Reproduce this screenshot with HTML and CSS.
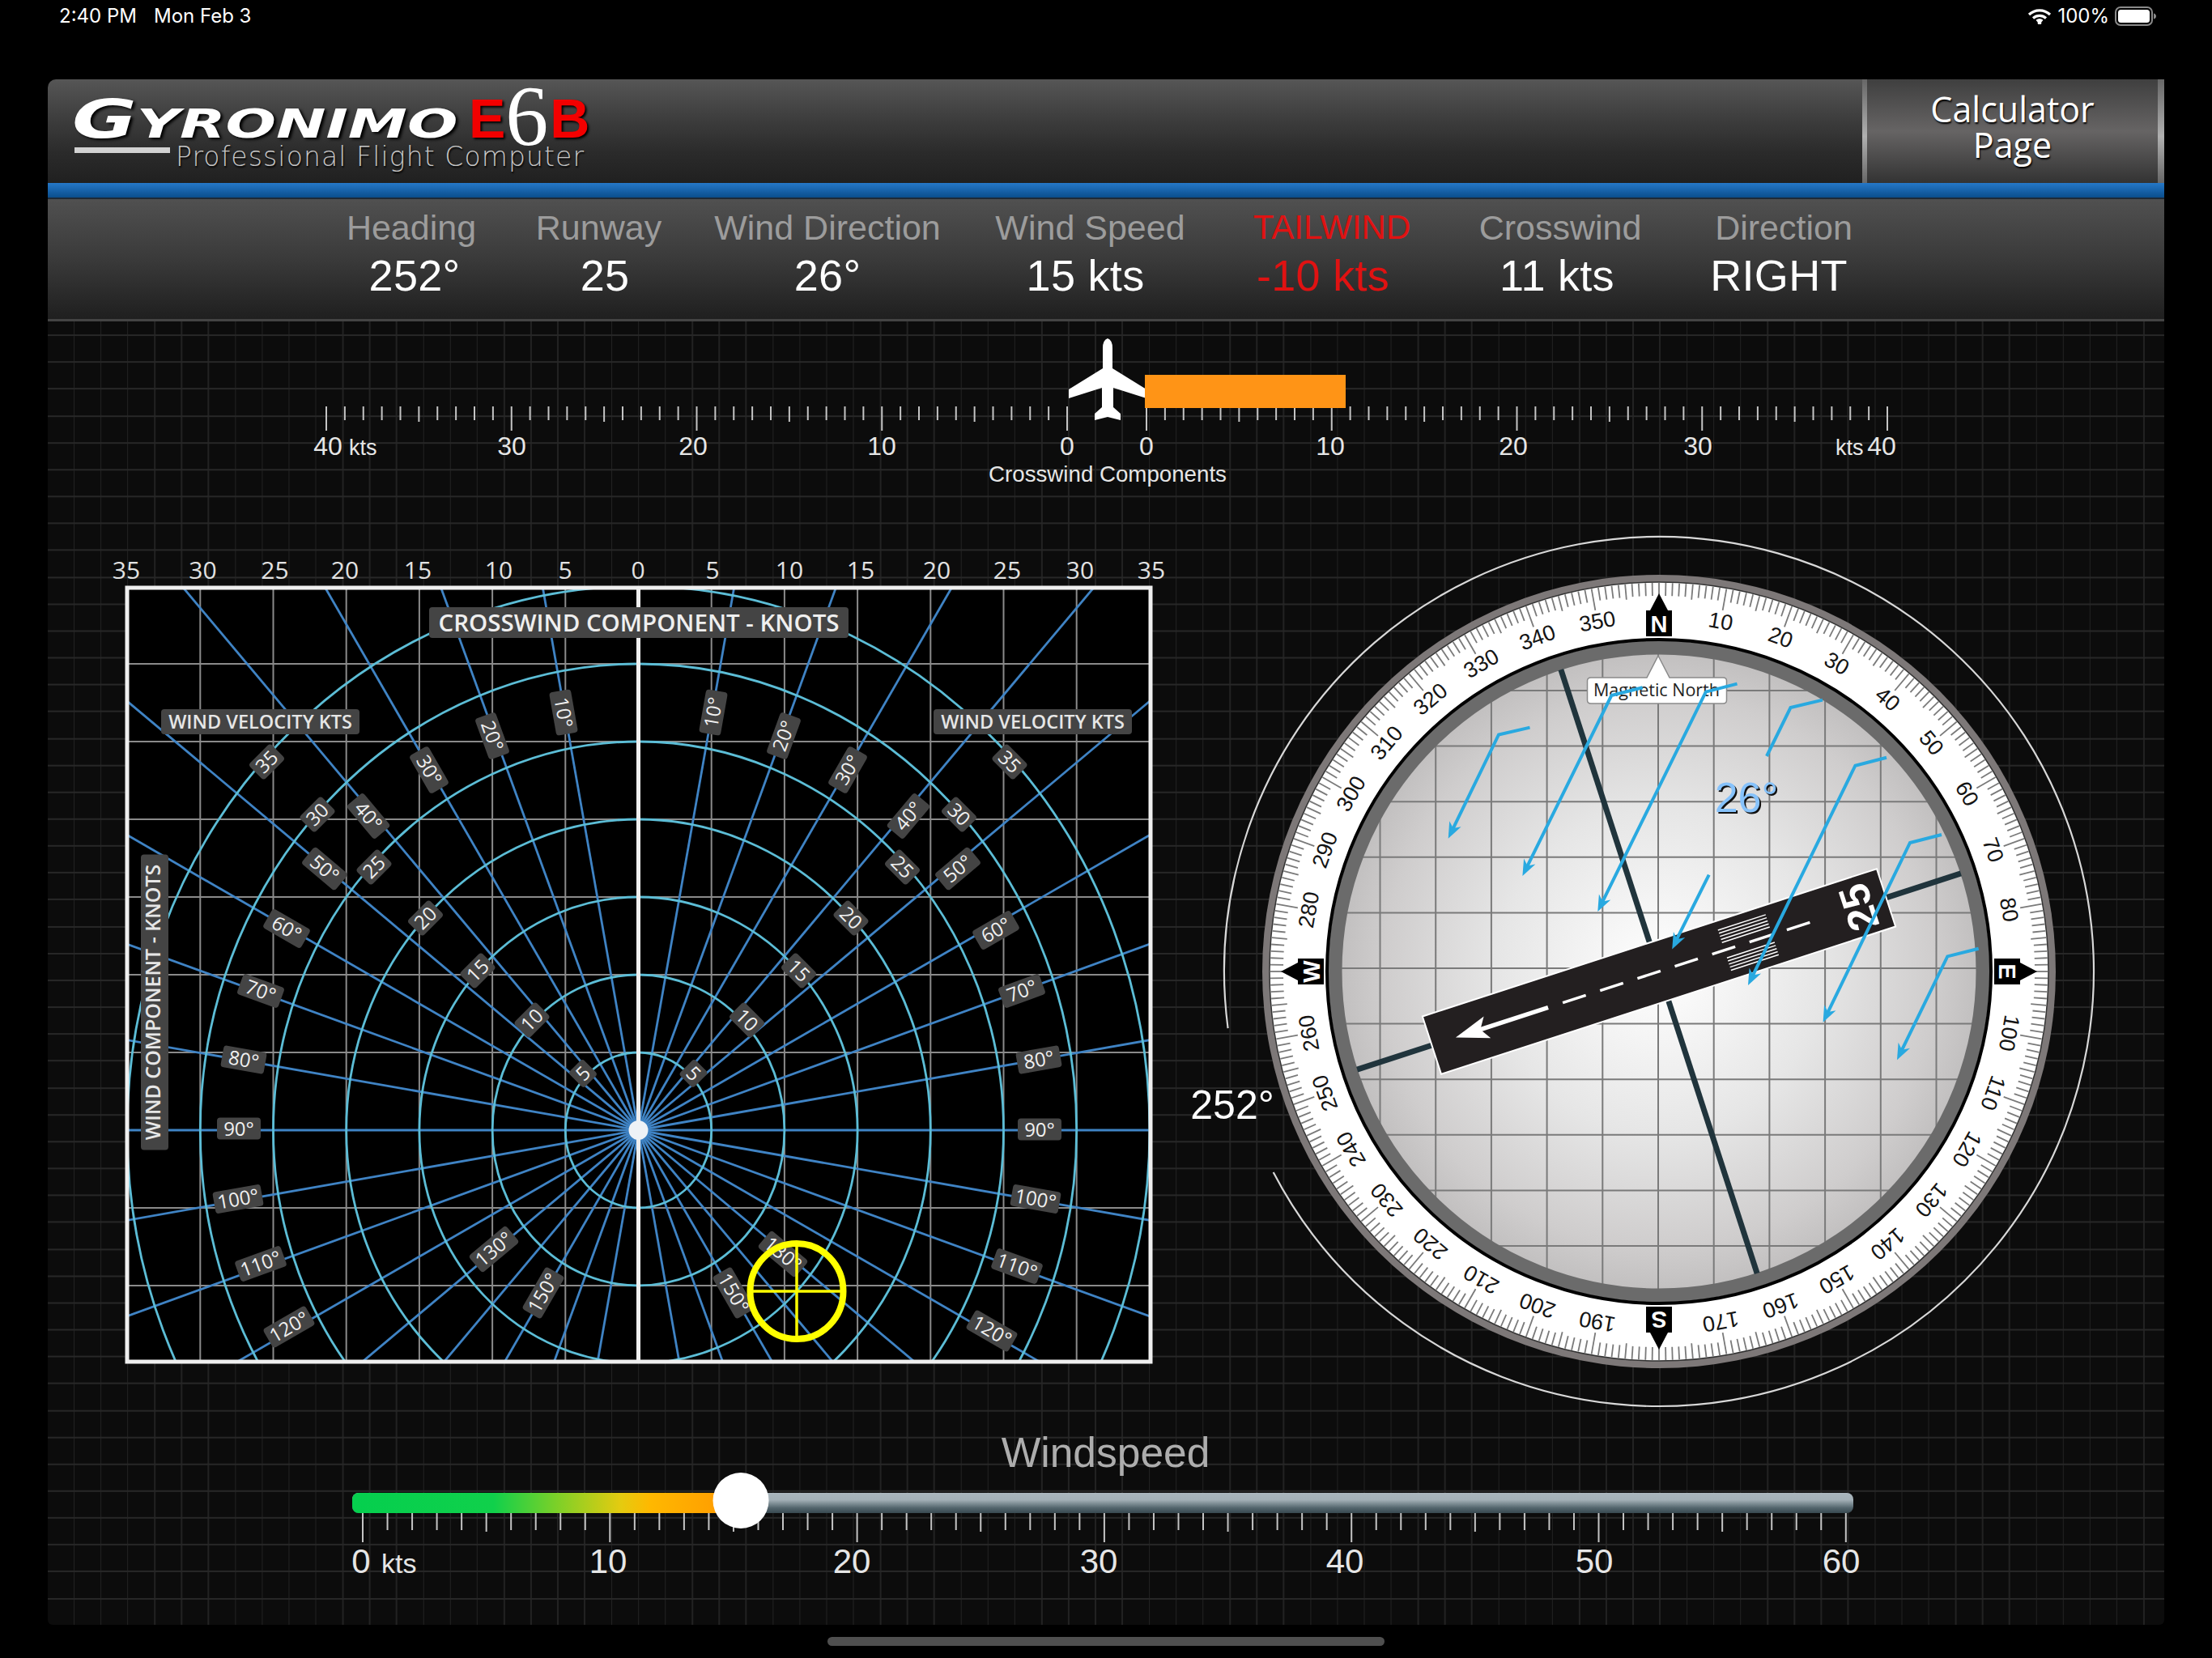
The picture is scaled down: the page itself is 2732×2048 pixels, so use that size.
FILE: index.html
```html
<!DOCTYPE html>
<html lang="en">
<head>
<meta charset="utf-8">
<title>Gyronimo E6B</title>
<link rel="stylesheet" href="styles.css">
</head>
<body>
<div class="status">
  <div class="status-left"><span>2:40 PM</span><span>Mon Feb 3</span></div>
  <div class="status-right">
    <svg class="wifi" viewBox="0 0 30 20"><path d="M2 8A19 19 0 0 1 28 8M7 12.5A12 12 0 0 1 23 12.5M11.5 16A5.5 5.5 0 0 1 18.5 16"/><circle cx="15" cy="18" r="2.4"/></svg>
    <span>100%</span>
    <svg class="battery" viewBox="0 0 52 24"><rect class="bat-shell" x="1" y="1" width="45" height="22" rx="6"/><rect class="bat-fill" x="4" y="4" width="39" height="16" rx="3.5"/><path class="bat-nub" d="M48 8.5Q51 9.5 51 12T48 15.5Z"/></svg>
  </div>
</div>
<main class="panel">
  <header class="header">
    <div class="logo">
      <div class="logo-top">
        <span class="gy"><span class="gy-g">G</span>yronimo</span>
        <span class="e6b">E</span><span class="six">6</span><span class="e6b">B</span>
      </div>
      <div class="logo-sub"><span class="logo-bar"></span><span class="tagline">Professional Flight Computer</span></div>
    </div>
    <button class="calc">Calculator<br>Page</button>
  </header>
  <div class="bluebar"></div>
  <section class="info">
    <div class="cell"><div class="lab">Heading</div><div class="val sh-a">252°</div></div>
    <div class="cell"><div class="lab">Runway</div><div class="val sh-b">25</div></div>
    <div class="cell"><div class="lab">Wind Direction</div><div class="val">26°</div></div>
    <div class="cell"><div class="lab">Wind Speed</div><div class="val sh-c">15 kts</div></div>
    <div class="cell"><div class="lab red tail">TAILWIND</div><div class="val red sh-d">-10 kts</div></div>
    <div class="cell"><div class="lab">Crosswind</div><div class="val sh-e">11 kts</div></div>
    <div class="cell"><div class="lab">Direction</div><div class="val sh-c">RIGHT</div></div>
  </section>
  <section class="board">
    <svg id="xwind" class="sec-top" viewBox="59 397 2614 243"></svg>
    <div class="mid">
      <svg id="chart" class="sec-chart" viewBox="59 640 1381 1110"></svg>
      <svg id="dial" class="sec-dial" viewBox="1440 640 1233 1110">
        <defs>
          <radialGradient id="glass"><stop offset="0" stop-color="#ffffff"/><stop offset="0.5" stop-color="#e6e6e6"/><stop offset="0.85" stop-color="#cfcdcd"/><stop offset="1" stop-color="#c0bebe"/></radialGradient>
          <clipPath id="glassclip"><circle cx="2049" cy="1200" r="392"/></clipPath>
        </defs>
      </svg>
    </div>
    <svg id="speed" class="sec-speed" viewBox="59 1750 2614 257">
      <defs>
        <linearGradient id="tgrey" x1="0" y1="0" x2="0" y2="1"><stop offset="0" stop-color="#aab6bd"/><stop offset="0.35" stop-color="#a3b0b7"/><stop offset="0.75" stop-color="#52646c"/><stop offset="1" stop-color="#384950"/></linearGradient>
        <linearGradient id="tgreen"><stop offset="0" stop-color="#05cf4e"/><stop offset="0.38" stop-color="#10d04b"/><stop offset="0.55" stop-color="#7dd028"/><stop offset="0.72" stop-color="#e4cb10"/><stop offset="0.8" stop-color="#ffb800"/><stop offset="1" stop-color="#ff9c00"/></linearGradient>
      </defs>
    </svg>
  </section>
</main>
<div class="home"></div>
<script src="app.js"></script>
</body>
</html>
```
FILE: styles.css
```css
* { box-sizing: border-box; }
html, body { margin: 0; padding: 0; background: #000; }
body { width: 2732px; height: 2048px; overflow: hidden; font-family: "Liberation Sans", Arial, sans-serif; color: #fff; }

.status { height: 98px; display: flex; justify-content: space-between; align-items: flex-start; padding: 6px 68px 0 73px; font: 24px/28px Inter, sans-serif; }
.status-left { display: flex; gap: 21px; }
.status-right { display: flex; align-items: center; gap: 7px; }
.wifi { width: 30px; height: 20px; }
.wifi path { fill: none; stroke: #fff; stroke-width: 3.2; }
.wifi circle { fill: #fff; }
.battery { width: 52px; height: 24px; }
.bat-shell { fill: none; stroke: #8a8a8a; stroke-width: 2; }
.bat-fill { fill: #fff; }
.bat-nub { fill: #8a8a8a; }

.panel { margin: 0 59px; height: 1909px; display: flex; flex-direction: column; }
.header { height: 128px; display: flex; justify-content: space-between; border-top-left-radius: 10px; background: linear-gradient(#565656, #3f3f3f 35%, #2b2b2b 70%, #202020); }
.logo { padding: 10px 0 0 30px; }
.logo-top { display: flex; align-items: baseline; height: 64px; margin-top: -28px; }
.gy { display: inline-block; width: 484px; margin-right: 6px; font: italic bold 50px/80px "DejaVu Sans", sans-serif; text-transform: uppercase; white-space: nowrap; transform: scaleX(1.47); transform-origin: left; text-shadow: 2px 2px 3px #000; }
.gy-g { font-size: 66px; }
.e6b { font: bold 68px/80px "Liberation Sans", sans-serif; color: #f30000; text-shadow: 2px 2px 3px #000; }
.six { font: 106px/110px "Liberation Serif", serif; color: #fff; margin: 0 2px 0 0; transform: translateY(9px); display: inline-block; }
.logo-sub { display: flex; align-items: flex-start; margin-top: 38px; }
.logo-bar { display: block; width: 118px; height: 7px; margin: 0 7px 0 3px; background: #d2d2d2; }
.tagline { font: 300 33px/36px "DejaVu Sans", sans-serif; letter-spacing: 1.1px; color: #c6c6c6; text-shadow: 1px 2px 2px #000; white-space: nowrap; margin-top: -6px; }
.calc { width: 373px; padding: 0 0 10px; border: 0; border-left: 6px solid; border-right: 8px solid; border-image: linear-gradient(#666, #b0b0b0 55%, #666) 1; background: linear-gradient(#3f3f3f, #666464 50%, #333); color: #fff; font: 43px/44px "Open Sans", sans-serif; text-shadow: 1px 2px 2px #000; }

.bluebar { height: 20px; background: linear-gradient(#2578c8, #0b4f8e 88%, #1e2a38 88%); }

.info { height: 151px; padding-left: 333px; display: grid; grid-template-columns: 232px 231px 334px 315px 282px 282px 270px; background: linear-gradient(#505050, #3a3a3a 50%, #1f1f1f); border-bottom: 3px solid #444; }
.cell { text-align: center; padding-top: 10px; white-space: nowrap; display: flex; flex-direction: column; align-items: center; }
.lab { font-size: 43px; line-height: 50px; color: #9c9c9c; }
.val { font-size: 54px; line-height: 62px; letter-spacing: .3px; color: #fff; margin-top: 3px; }
.tail { font-size: 42px; }
.red { color: #e01212; }
.sh-a { padding-left: 8px; }
.sh-b { padding-left: 15px; }
.sh-c { padding-right: 12px; }
.sh-d { padding-right: 22px; }
.sh-e { padding-right: 8px; }

.board { flex: 1; display: flex; flex-direction: column; border-radius: 0 0 6px 6px; background-color: #0c0c0c; background-image: repeating-linear-gradient(to bottom, transparent 0, transparent 31.2px, #272727 31.2px, #272727 33.2px), repeating-linear-gradient(to right, transparent 0, transparent 31.7px, #222 31.7px, #222 33.2px); background-position: 0 -15px, 0 -9px; }
.sec-top { display: block; width: 2614px; height: 243px; }
.mid { display: flex; height: 1110px; }
.sec-chart { display: block; width: 1381px; height: 1110px; }
.sec-dial { display: block; width: 1233px; height: 1110px; }
.sec-speed { display: block; width: 2614px; height: 257px; }
.home { width: 688px; height: 11px; margin: 15px auto 0; border-radius: 6px; background: #4f4f4f; }

/* SVG: scales */
.tick { stroke: #c4c4c4; stroke-width: 2; }
.scale-num { font: 32px "Liberation Sans", sans-serif; fill: #e6e6e6; text-anchor: middle; }
.scale-kts { font: 27px "Liberation Sans", sans-serif; fill: #e6e6e6; }
.scale-cap { font: 27.7px "Liberation Sans", sans-serif; fill: #e6e6e6; text-anchor: middle; }
.plane { fill: #fff; }
.orange { fill: #ff9416; }
.speed-num { font: 42px "Liberation Sans", sans-serif; fill: #e6e6e6; text-anchor: middle; }
.speed-kts { font: 34px "Liberation Sans", sans-serif; fill: #e6e6e6; }
.speed-cap { font: 51.5px "Liberation Sans", sans-serif; fill: #adadad; text-anchor: middle; }
.thumb { fill: #fff; }

/* SVG: chart */
.c-bg { fill: #000; }
.c-grid { stroke: #8a8a8a; stroke-width: 2; }
.c-rad { stroke: #3f83c4; stroke-width: 2.8; }
.c-arc { fill: none; stroke: #5cbdd6; stroke-width: 2.8; }
.c-zero { stroke: #efefef; stroke-width: 5; }
.c-frame { fill: none; stroke: #efefef; stroke-width: 5; }
.c-dot { fill: #eef2f6; }
.c-top { font: 30px "Open Sans", sans-serif; fill: #e2e2e2; text-anchor: middle; }
.pill { fill: #444; }
.pill-t { font: 24px "Open Sans", sans-serif; fill: #f0f0f0; text-anchor: middle; }
.pill-head { font: 600 29.5px "Open Sans", sans-serif; fill: #efefef; text-anchor: middle; }
.pill-sub { font: 600 23.5px "Open Sans", sans-serif; fill: #e6e6e6; text-anchor: middle; }
.pill-side { font: 600 25px "Open Sans", sans-serif; fill: #e6e6e6; text-anchor: middle; }
.yel-ring { fill: none; stroke: #ffff00; stroke-width: 8; }
.yel-x { stroke: #ffff00; stroke-width: 3.5; }

/* SVG: compass */
.thin-ring { fill: none; stroke: #d8d8d8; stroke-width: 2.2; }
.ring-out { fill: #7d7878; }
.ring-white { fill: #fff; stroke: #333; stroke-width: 1.5; }
.ring-black { fill: none; stroke: #000; stroke-width: 4; }
.ring-grey { fill: none; stroke: #6b6b6b; stroke-width: 17; }
.glass { fill: url(#glass); }
.d-grid { stroke: #7a7a7a; stroke-width: 2; }
.d-tick { stroke: #7a7a7a; stroke-width: 1.8; }
.d-num { font: 27px "Liberation Sans", sans-serif; fill: #141414; text-anchor: middle; }
.d-box { fill: #000; }
.d-let { font: bold 29px "Liberation Sans", sans-serif; fill: #fff; text-anchor: middle; }
.d-deg { font: 50px "Liberation Sans", sans-serif; fill: #fff; text-anchor: middle; }
.axis { stroke: #20343c; stroke-width: 7; }
.rw { fill: #231f20; stroke: #fff; stroke-width: 2; }
.rw-w { stroke: #fff; stroke-width: 3.5; }
.rw-p { stroke: #fff; stroke-width: 1.5; }
.rw-s { stroke: #fff; stroke-width: 5.5; }
.rw-h { fill: #fff; }
.rw-n { font: bold 52px "Liberation Sans", sans-serif; fill: #fff; text-anchor: middle; }
.mag { fill: #fff; stroke: #8a8a8a; stroke-width: 1.5; }
.mag-t { font: 21.5px "Open Sans", sans-serif; fill: #222; text-anchor: middle; }
.wind { fill: none; stroke: #29a9e0; stroke-width: 4; }
.wind-h { fill: #29a9e0; }
.d-26 { font: 52px "Liberation Sans", sans-serif; fill: #86c2fb; text-anchor: middle; text-shadow: 2px 2px 0 #111; }
```
FILE: app.js
```js
var NS = 'http://www.w3.org/2000/svg';
function el(p, n, a, t) {
  var e = document.createElementNS(NS, n);
  for (var k in a) e.setAttribute(k, a[k]);
  if (t !== undefined) e.textContent = t;
  p.appendChild(e);
  return e;
}
function line(p, c, x1, y1, x2, y2) { return el(p, 'line', { 'class': c, x1: x1, y1: y1, x2: x2, y2: y2 }); }
function text(p, c, x, y, t, tr) {
  var a = { 'class': c, x: x, y: y };
  if (tr) a.transform = tr;
  return el(p, 'text', a, t);
}
var i, a;

/* Crosswind scale */
var xw = document.getElementById('xwind');
for (i = 0; i <= 40; i++) {
  var ln = i % 10 === 0 ? 532 : (i % 5 === 0 ? 521 : 519);
  line(xw, 'tick', 403 + i * 22.875, 502, 403 + i * 22.875, ln);
  line(xw, 'tick', 1416 + i * 22.875, 502, 1416 + i * 22.875, ln);
}
[[405, '40'], [632, '30'], [856, '20'], [1089, '10'], [1318, '0'], [1416, '0'], [1643, '10'], [1869, '20'], [2097, '30'], [2324, '40']].forEach(function (d) {
  text(xw, 'scale-num', d[0], 562, d[1]);
});
text(xw, 'scale-kts', 431, 562, 'kts');
text(xw, 'scale-kts', 2267, 562, 'kts');
text(xw, 'scale-cap', 1368, 595, 'Crosswind Components');
el(xw, 'path', { 'class': 'plane', d: 'M1368 418Q1374 420 1374 430V455L1416 481V492L1375 479V503L1384 511V519L1368 515L1352 519V511L1361 503V479L1320 492V481L1362 455V430Q1362 420 1368 418Z' });
el(xw, 'rect', { 'class': 'orange', x: 1414, y: 463, width: 248, height: 41 });

/* Polar chart */
var ch = document.getElementById('chart');
var defs = el(ch, 'defs', {});
el(el(defs, 'clipPath', { id: 'fr' }), 'rect', { x: 157, y: 726, width: 1264, height: 956 });
el(ch, 'rect', { 'class': 'c-bg', x: 155, y: 724, width: 1268, height: 960 });
var cx = 788.5, cy = 1396, g = el(ch, 'g', { 'clip-path': 'url(#fr)' });
for (i = 1; i <= 6; i++) {
  line(g, 'c-grid', cx - 90.2 * i, 724, cx - 90.2 * i, 1684);
  line(g, 'c-grid', cx + 90.2 * i, 724, cx + 90.2 * i, 1684);
  line(g, 'c-grid', 155, cy - 96 * i, 1423, cy - 96 * i);
}
line(g, 'c-grid', 155, cy + 96, 1423, cy + 96);
line(g, 'c-grid', 155, cy + 192, 1423, cy + 192);
for (a = 10; a <= 170; a += 10) {
  var r = a * Math.PI / 180, sx = Math.sin(r) * 1400, sy = -Math.cos(r) * 1400;
  line(g, 'c-rad', cx, cy, cx + sx, cy + sy);
  line(g, 'c-rad', cx, cy, cx - sx, cy + sy);
}
for (i = 1; i <= 7; i++) el(g, 'ellipse', { 'class': 'c-arc', cx: cx, cy: cy, rx: 90.2 * i, ry: 96 * i });
line(g, 'c-zero', cx, 724, cx, 1684);
el(ch, 'circle', { 'class': 'c-dot', cx: cx, cy: cy, r: 12 });

[[156, 35], [250.5, 30], [339.5, 25], [426, 20], [516, 15], [616, 10], [698, 5], [788, 0], [880, 5], [975, 10], [1063, 15], [1157, 20], [1244, 25], [1334, 30], [1422, 35]].forEach(function (d) {
  text(ch, 'c-top', d[0], 715, d[1]);
});

function pill(x, y, rot, t, w) {
  var p = el(ch, 'g', { transform: 'translate(' + x + ' ' + y + ') rotate(' + rot + ')' });
  el(p, 'rect', { 'class': 'pill', x: -w / 2, y: -13.5, width: w, height: 27, rx: 4 });
  text(p, 'pill-t', 0, 8.5, t);
}
[[696, 880, 80, '10°'], [608, 909, 70, '20°'], [530, 951, 60, '30°'], [455, 1008, 50, '40°'], [401, 1073, 40, '50°'], [354, 1147, 30, '60°'], [322, 1224, 20, '70°'], [301, 1309, 10, '80°'], [295, 1394, 0, '90°'],
 [294, 1481, -10, '100°'], [322, 1561, -20, '110°'], [357, 1639, -30, '120°'], [610, 1543, -40, '130°'], [671, 1597, -60, '150°'],
 [881, 880, -80, '10°'], [968, 909, -70, '20°'], [1047, 951, -60, '30°'], [1122, 1008, -50, '40°'], [1183, 1073, -40, '50°'], [1230, 1149, -30, '60°'], [1262, 1224, -20, '70°'], [1283, 1309, -10, '80°'], [1284, 1395, 0, '90°'],
 [1279, 1481, 10, '100°'], [1256, 1564, 20, '110°'], [1225, 1644, 30, '120°'], [967, 1549, 40, '130°'], [906, 1597, 60, '150°']].forEach(function (d) {
  pill(d[0], d[1], d[2], d[3], d[3].length > 3 ? 60 : 54);
});
[[720, 1326, '5'], [657, 1260, '10'], [590, 1199, '15'], [525.5, 1134, '20'], [462, 1071, '25'], [392, 1006, '30'], [329.5, 941, '35']].forEach(function (d) {
  pill(d[0], d[1], -45, d[2], d[2].length > 1 ? 38 : 25);
  pill(1576.5 - d[0] + (d[2] === '10' ? 3 : 0), d[1], 45, d[2], d[2].length > 1 ? 38 : 25);
});
function band(x, y, w, h, c, t, base, tr) {
  var p = el(ch, 'g', tr ? { transform: tr } : {});
  el(p, 'rect', { 'class': 'pill', x: x, y: y, width: w, height: h, rx: 4 });
  text(p, c, x + w / 2, base, t);
}
band(530, 750, 518, 38, 'pill-head', 'CROSSWIND COMPONENT - KNOTS', 780);
band(199, 876, 245, 31, 'pill-sub', 'WIND VELOCITY KTS', 900);
band(1153, 876, 245, 31, 'pill-sub', 'WIND VELOCITY KTS', 900);
band(-182.5, -17, 365, 34, 'pill-side', 'WIND COMPONENT - KNOTS', 7, 'translate(191 1238) rotate(-90)');
el(ch, 'rect', { 'class': 'c-frame', x: 157, y: 726, width: 1264, height: 956 });
el(ch, 'ellipse', { 'class': 'yel-ring', cx: 984, cy: 1595, rx: 57.5, ry: 59 });
line(ch, 'yel-x', 984, 1536, 984, 1654);
line(ch, 'yel-x', 926, 1595, 1042, 1595);

/* Compass */
var dl = document.getElementById('dial'), CX = 2049, CY = 1200;
function pt(deg, R) {
  var r = deg * Math.PI / 180;
  return [CX + Math.sin(r) * R, CY - Math.cos(r) * R];
}
var s = pt(262.5, 537), e = pt(242.5, 537);
el(dl, 'path', { 'class': 'thin-ring', d: 'M' + s[0] + ' ' + s[1] + 'A537 537 0 1 1 ' + e[0] + ' ' + e[1] });
text(dl, 'd-deg', 1522, 1382, '252°');
el(dl, 'circle', { 'class': 'ring-out', cx: CX, cy: CY, r: 490 });
el(dl, 'circle', { 'class': 'ring-white', cx: CX, cy: CY, r: 481 });
for (a = 0; a < 360; a++) {
  var inner = a % 10 === 0 ? 453 : (a % 5 === 0 ? 461 : 464);
  var p1 = pt(a, 480), p2 = pt(a, inner);
  line(dl, 'd-tick', p1[0], p1[1], p2[0], p2[1]);
}
for (a = 10; a < 360; a += 10) {
  if (a % 90 === 0) continue;
  text(dl, 'd-num', CX, CY - 430, a, 'rotate(' + a + ' ' + CX + ' ' + CY + ')');
}
[[0, 'N'], [90, 'E'], [180, 'S'], [270, 'W']].forEach(function (d) {
  var q = el(dl, 'g', { transform: 'rotate(' + d[0] + ' ' + CX + ' ' + CY + ')' });
  el(q, 'path', { 'class': 'd-box', d: 'M2049 733L2060 754H2038Z' });
  el(q, 'rect', { 'class': 'd-box', x: 2033, y: 754, width: 32, height: 32 });
  text(q, 'd-let', CX, 780.5, d[1]);
});
el(dl, 'circle', { 'class': 'glass', cx: CX, cy: CY, r: 400 });
var gl = el(dl, 'g', { 'clip-path': 'url(#glassclip)' });
for (i = -6; i <= 6; i++) {
  line(gl, 'd-grid', CX - 1 + i * 68.7, 800, CX - 1 + i * 68.7, 1600);
  line(gl, 'd-grid', 1650, 1196 + i * 68.6, 2450, 1196 + i * 68.6);
}
el(dl, 'circle', { 'class': 'ring-grey', cx: CX, cy: CY, r: 400 });
el(dl, 'circle', { 'class': 'ring-black', cx: CX, cy: CY, r: 410 });
var rw = el(dl, 'g', { transform: 'rotate(-18 2049 1200)' });
line(rw, 'axis', CX - 392, CY, CX + 392, CY);
line(rw, 'axis', CX, CY - 392, CX, CY + 392);
el(rw, 'rect', { 'class': 'rw', x: CX - 295, y: CY - 37.5, width: 590, height: 75 });
line(rw, 'rw-s', CX - 235, CY, CX - 144, CY);
el(rw, 'path', { 'class': 'rw-h', d: 'M' + (CX - 264) + ' ' + CY + 'l41 -14l-9 14l9 14Z' });
for (i = 0; i < 7; i++) line(rw, 'rw-w', CX - 125 + i * 48.5, CY, CX - 95 + i * 48.5, CY);
[9, 13, 17, 21, 25].forEach(function (v) {
  line(rw, 'rw-p', CX + 85, CY - v - 1, CX + 147, CY - v - 1);
  line(rw, 'rw-p', CX + 85, CY + v + 1, CX + 147, CY + v + 1);
});
text(rw, 'rw-n', 0, 19, '25', 'translate(' + (CX + 258) + ' ' + (CY + 1) + ') rotate(-90)');
el(dl, 'path', { 'class': 'mag', d: 'M2048 810L2062 837H2128Q2132.5 837 2132.5 841V865Q2132.5 869 2128 869H1965Q1960.5 869 1960.5 865V841Q1960.5 837 1965 837H2034Z' });
text(dl, 'mag-t', 2046, 860, 'Magnetic North');
function head(tx, ty, fx, fy) {
  var d = Math.atan2(ty - fy, tx - fx), c = Math.cos(d), n = Math.sin(d);
  function P(u, v) { return (tx + u * c - v * n).toFixed(1) + ',' + (ty + u * n + v * c).toFixed(1); }
  el(dl, 'polygon', { 'class': 'wind-h', points: [P(0, 0), P(-20, -8), P(-14, 0), P(-20, 8)].join(' ') });
}
[[1889.5, 898.6, 1851, 907.5, 1788.7, 1035.7], [2028.7, 849.3, 1990.3, 859, 1880.4, 1082], [2145.5, 844.6, 2106.8, 854.6, 1973.3, 1126],
 [2330, 935.7, 2291.4, 945.7, 2159, 1217], [2398, 1031, 2359, 1041, 2251.6, 1262.7], [2443.7, 1171.8, 2405.3, 1181.4, 2343, 1309.3]].forEach(function (d) {
  el(dl, 'polyline', { 'class': 'wind', points: d[0] + ',' + d[1] + ' ' + d[2] + ',' + d[3] + ' ' + (d[4] + (d[2] - d[4]) * 0.04) + ',' + (d[5] + (d[3] - d[5]) * 0.04) });
  head(d[4], d[5], d[2], d[3]);
});
el(dl, 'polyline', { 'class': 'wind', points: '2251,864.6 2211.5,874 2182,934' });
el(dl, 'polyline', { 'class': 'wind', points: '2110.7,1080.7 2068,1166' });
head(2065.2, 1172.5, 2110.7, 1080.7);
text(dl, 'd-26', 2157, 1003, '26°');

/* Windspeed slider */
var sp = document.getElementById('speed');
text(sp, 'speed-cap', 1365.5, 1812, 'Windspeed');
for (i = 0; i <= 60; i++) {
  var x = 448 + i * 30.53, en = i % 10 === 0 ? 1905 : (i % 5 === 0 ? 1892 : 1890);
  line(sp, 'tick', x, 1868, x, en);
}
el(sp, 'rect', { fill: 'url(#tgrey)', x: 435, y: 1844, width: 1854, height: 25, rx: 8 });
el(sp, 'rect', { fill: 'url(#tgreen)', x: 435, y: 1844, width: 460, height: 25, rx: 8 });
el(sp, 'circle', { 'class': 'thumb', cx: 915, cy: 1853.5, r: 34.5 });
[[446, '0'], [751, '10'], [1052, '20'], [1357, '30'], [1661, '40'], [1969, '50'], [2274, '60']].forEach(function (d) {
  text(sp, 'speed-num', d[0], 1943, d[1]);
});
text(sp, 'speed-kts', 471, 1943, 'kts');
```
